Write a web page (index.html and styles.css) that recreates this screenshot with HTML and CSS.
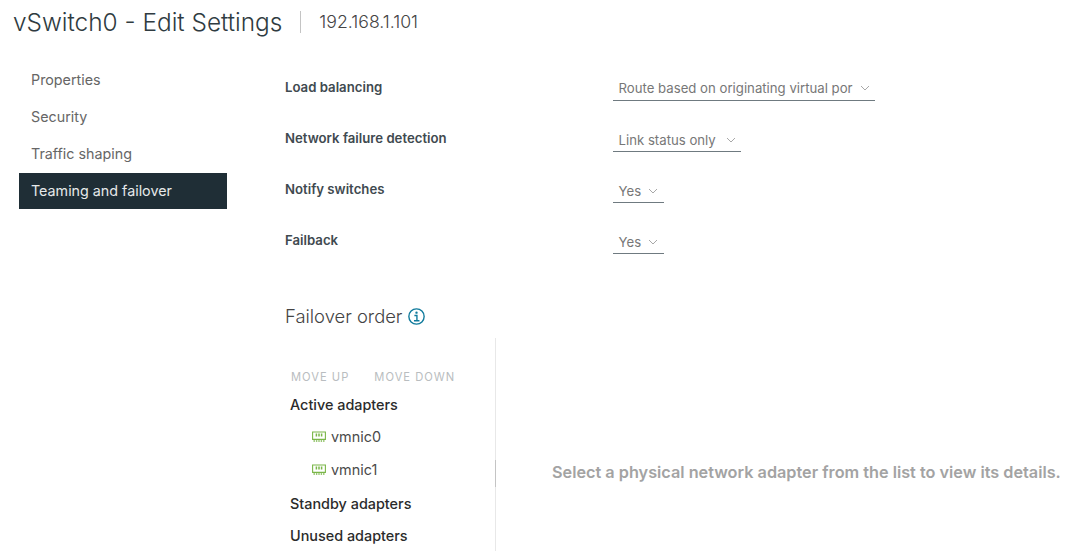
FILE: index.html
```html
<!DOCTYPE html>
<html lang="en">
<head>
    <meta charset="UTF-8">
    <title>vSwitch0 - Edit Settings</title>
    <link rel="stylesheet" href="styles.css">
</head>
<body>
    <header class="title-bar">
        <h1 class="title">vSwitch0 - Edit Settings</h1>
        <span class="host">192.168.1.101</span>
    </header>

    <div class="main">
        <nav class="side-nav">
            <a class="nav-item">Properties</a>
            <a class="nav-item">Security</a>
            <a class="nav-item">Traffic shaping</a>
            <a class="nav-item active">Teaming and failover</a>
        </nav>

        <div class="content">
            <div class="form-row">
                <label class="form-label">Load balancing</label>
                <div class="select select-wide">
                    <span class="select-value">Route based on originating virtual por</span>
                    <svg class="chevron" viewBox="0 0 10 6"><path d="M1 1l4 4 4-4"/></svg>
                </div>
            </div>
            <div class="form-row">
                <label class="form-label">Network failure detection</label>
                <div class="select select-mid">
                    <span class="select-value">Link status only</span>
                    <svg class="chevron" viewBox="0 0 10 6"><path d="M1 1l4 4 4-4"/></svg>
                </div>
            </div>
            <div class="form-row">
                <label class="form-label">Notify switches</label>
                <div class="select select-small">
                    <span class="select-value">Yes</span>
                    <svg class="chevron" viewBox="0 0 10 6"><path d="M1 1l4 4 4-4"/></svg>
                </div>
            </div>
            <div class="form-row">
                <label class="form-label">Failback</label>
                <div class="select select-small">
                    <span class="select-value">Yes</span>
                    <svg class="chevron" viewBox="0 0 10 6"><path d="M1 1l4 4 4-4"/></svg>
                </div>
            </div>

            <h2 class="section-title">
                Failover order
                <svg class="info-icon" viewBox="0 0 16 16">
                    <circle cx="8" cy="8" r="7.2"/>
                    <path d="M6 7h2.4v4.8M5.6 12h5.2"/>
                    <circle class="info-dot" cx="8" cy="4.4" r="1.1"/>
                </svg>
            </h2>

            <div class="split">
                <div class="adapter-list">
                    <div class="toolbar">
                        <span class="tool">MOVE UP</span>
                        <span class="tool">MOVE DOWN</span>
                    </div>
                    <div class="group">Active adapters</div>
                    <div class="adapter">
                        <svg class="nic-icon" viewBox="0 0 14 11"><path d="M.6 1h12.8v7.4H.6z"/><path class="nic-ticks" d="M4.4 2.6v3M7 2.6v3M9.6 2.6v3"/><path class="nic-ticks" d="M1.5 10h11" stroke-dasharray="1.4 1"/></svg>
                        vmnic0
                    </div>
                    <div class="adapter">
                        <svg class="nic-icon" viewBox="0 0 14 11"><path d="M.6 1h12.8v7.4H.6z"/><path class="nic-ticks" d="M4.4 2.6v3M7 2.6v3M9.6 2.6v3"/><path class="nic-ticks" d="M1.5 10h11" stroke-dasharray="1.4 1"/></svg>
                        vmnic1
                    </div>
                    <div class="group">Standby adapters</div>
                    <div class="group">Unused adapters</div>
                    <div class="scroll-thumb"></div>
                </div>
                <div class="details">Select a physical network adapter from the list to view its details.</div>
            </div>
        </div>
    </div>
</body>
</html>
```

FILE: styles.css
```css
html, body {
    height: 100%;
}
body {
    margin: 0;
    height: 551px;
    overflow: hidden;
    background: #fff;
    font-family: Inter, "Open Sans", sans-serif;
    color: #565656;
}
.title-bar {
    display: flex;
    align-items: center;
    height: 43px;
    padding-left: 13px;
}
.title {
    margin: 0;
    font-size: 24.4px;
    font-weight: 300;
    color: #2f3b41;
    white-space: nowrap;
}
.host {
    margin-left: 18px;
    padding-left: 18px;
    border-left: 1px solid #c4c4c4;
    font-size: 17.7px;
    font-weight: 300;
    line-height: 22px;
    color: #444;
}
.main {
    display: flex;
    padding-top: 19px;
}
.side-nav {
    display: flex;
    flex-direction: column;
    flex: none;
    width: 208px;
    margin-left: 19px;
    gap: 1px;
}
.nav-item {
    height: 36px;
    line-height: 36px;
    padding-left: 12px;
    font-size: 14.3px;
    color: #666;
}
.nav-item.active {
    background: #1f2e36;
    color: #e6e9ea;
}
.content {
    flex: 1;
    margin-left: 58px;
    padding-top: 12px;
}
.form-row {
    display: flex;
    height: 51px;
}
.form-label {
    width: 328px;
    padding-top: 4px;
    font-size: 13.2px;
    font-weight: 600;
    line-height: 18px;
    color: #3f4a50;
}
.select {
    display: flex;
    align-items: center;
    box-sizing: border-box;
    height: 24px;
    margin-top: 3px;
    padding-left: 5.5px;
    border-bottom: 1px solid #6f7a80;
    font-size: 13.2px;
    color: #777;
}
.select-wide {
    width: 262px;
    height: 25px;
    margin-top: 2px;
}
.select-wide .select-value {
    width: 235px;
    white-space: nowrap;
}
.select-mid {
    width: 128px;
}
.select-small {
    width: 51px;
}
.chevron {
    flex: none;
    width: 10px;
    height: 6px;
    margin-left: 6px;
    fill: none;
    stroke: #a8a8a8;
    stroke-width: 1;
}
.select-mid .chevron {
    margin-left: 10px;
}
.select-small .chevron {
    margin-left: 7px;
}
.section-title {
    display: flex;
    align-items: center;
    margin: 23px 0 0;
    height: 30px;
    font-size: 18.4px;
    font-weight: 300;
    color: #444;
}
.info-icon {
    width: 17px;
    height: 17px;
    margin-left: 6px;
    fill: none;
    stroke: #0f7a9c;
    stroke-width: 1.3;
}
.info-dot {
    fill: #0f7a9c;
    stroke: none;
}
.split {
    display: flex;
    height: 213px;
    margin-top: 7px;
}
.adapter-list {
    position: relative;
    flex: none;
    box-sizing: border-box;
    width: 211px;
    padding: 32px 0 0 5px;
    border-right: 1px solid #e8e8e8;
}
.scroll-thumb {
    position: absolute;
    right: -1px;
    top: 122px;
    width: 1px;
    height: 27px;
    background: #c4c4c4;
}
.toolbar {
    display: flex;
    gap: 25px;
    padding-left: 1px;
    font-size: 11.2px;
    line-height: 14px;
    letter-spacing: 1px;
    color: #b9bdc0;
}
.group {
    height: 32px;
    line-height: 32px;
    font-size: 14.4px;
    font-weight: 500;
    color: #2b2b2b;
}
.toolbar + .group {
    margin-top: 5px;
    margin-bottom: -1px;
}
.adapter + .group {
    margin-top: 2px;
}
.adapter {
    display: flex;
    align-items: center;
    height: 33px;
    padding-left: 22px;
    font-size: 14.4px;
    color: #4a4a4a;
}
.nic-icon {
    width: 14px;
    height: 11px;
    margin-right: 5px;
    fill: none;
    stroke: #7ab648;
    stroke-width: 1.1;
}
.nic-ticks {
    stroke-width: 1.5;
}
.details {
    flex: 1;
    box-sizing: border-box;
    padding: 124px 0 0 56px;
    font-size: 16.25px;
    font-weight: 600;
    line-height: 20px;
    color: #a3a3a3;
    white-space: nowrap;
}
```
